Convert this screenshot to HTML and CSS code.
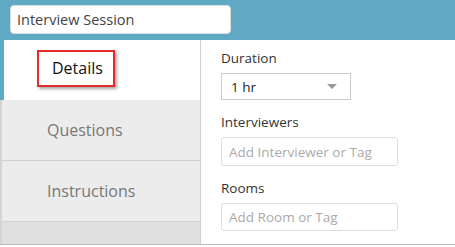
FILE: index.html
```html
<!DOCTYPE html>
<html>
<head>
<title>Interview Session</title>
<link rel="stylesheet" href="styles.css">
</head>
<body>

<div class="topbar">
  <input type="text" class="session-name" value="Interview Session">
</div>

<div class="editor">
  <div class="tabs">
    <div class="tab active"><span class="highlight">Details</span></div>
    <div class="tab">Questions</div>
    <div class="tab">Instructions</div>
    <div class="tabs-fill"></div>
  </div>

  <div class="details">
    <label>Duration</label>
    <div class="select">
      <span>1 hr</span>
      <span class="caret"></span>
    </div>

    <label>Interviewers</label>
    <div class="field wide">Add Interviewer or Tag</div>

    <label>Rooms</label>
    <div class="field wide">Add Room or Tag</div>
  </div>
</div>

</body>
</html>
```

FILE: styles.css
```css
body {
  margin: 0;
  padding: 0;
  font-family: "Open Sans", Lato, sans-serif;
  background-color: white;
}

.topbar {
  background-color: #5fa9c5;
  height: 40px;
  padding: 5px 0 0 10px;
  box-sizing: border-box;
}

.session-name {
  width: 221px;
  height: 29px;
  border: 1px solid #ddd;
  border-radius: 4px;
  padding: 0 6px;
  box-sizing: border-box;
  font-family: inherit;
  font-size: 14.5px;
  color: #444;
}

.editor {
  display: flex;
  height: 204px;
  border-bottom: 1px solid #bbb;
}

.tabs {
  width: 200px;
  display: flex;
  flex-direction: column;
  background-color: #e0e0e0;
  border-left: 2px solid #d4d4d4;
  box-sizing: border-box;
}

.tab {
  height: 60px;
  display: flex;
  align-items: center;
  padding-left: 45px;
  font-size: 16px;
  color: #777;
  background-color: #ececec;
  border-bottom: 1px solid #d2d2d2;
}

.tab.active {
  height: 60px;
  background-color: white;
  color: #111;
  margin-left: -2px;
  border-left: 4px solid #5fa9c5;
  padding-left: 33px;
  border-bottom: none;
}

.highlight {
  border: 2px solid #e52a2a;
  padding: 5px 10px 6px 13px;
  margin-bottom: 3px;
  box-shadow: 2px 2px 3px rgba(0, 0, 0, 0.35);
}

.tabs-fill {
  flex: 1;
  background-color: #e0e0e0;
}

.details {
  flex: 1;
  border-left: 1px solid #cfcfcf;
  padding: 9px 0 0 20px;
  display: flex;
  flex-direction: column;
  align-items: flex-start;
}

.details label {
  font-size: 13.5px;
  color: #333;
  margin-bottom: 6px;
}

.select {
  width: 130px;
  height: 28px;
  border: 1px solid #ccc;
  box-sizing: border-box;
  display: flex;
  align-items: center;
  justify-content: space-between;
  padding: 0 13px 0 9px;
  font-size: 13.5px;
  color: #222;
  margin-bottom: 13px;
}

.caret {
  width: 0;
  height: 0;
  border-left: 5px solid transparent;
  border-right: 5px solid transparent;
  border-top: 5px solid #999;
}

.field {
  height: 29px;
  border: 1px solid #ddd;
  border-radius: 3px;
  box-sizing: border-box;
  display: flex;
  align-items: center;
  padding-left: 7px;
  font-size: 13.5px;
  color: #aaa;
  margin-bottom: 13px;
}

.field.wide {
  width: 177px;
}
```
